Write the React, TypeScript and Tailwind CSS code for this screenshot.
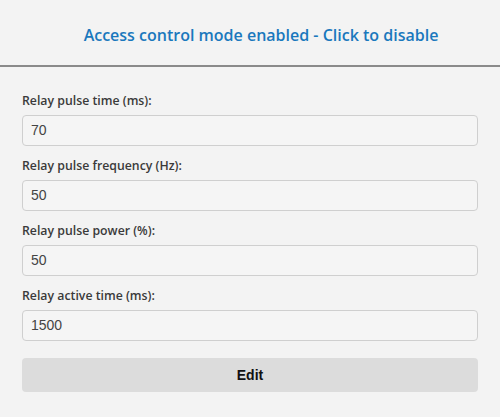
import React from "react";

const fields = [
  { label: "Relay pulse time (ms):", value: "70" },
  { label: "Relay pulse frequency (Hz):", value: "50" },
  { label: "Relay pulse power (%):", value: "50" },
  { label: "Relay active time (ms):", value: "1500" },
];

export default function App() {
  return (
    <div className="w-[500px] h-[417px] bg-[#f3f3f3] overflow-hidden">
      <div className="h-[65px] flex items-center justify-center pl-[22px] pt-[5px]">
        <span
          className="text-[#1a78bd] text-[16px] font-semibold"
          style={{ fontFamily: '"Open Sans", sans-serif' }}
        >
          Access control mode enabled - Click to disable
        </span>
      </div>
      <div className="h-[2px] bg-[#8a8a8a]" />
      <div className="px-[22px] pt-[24px]">
        {fields.map((f, i) => (
          <div key={i} className={i === 3 ? "mb-[17px]" : "mb-[10px]"}>
            <div
              className="h-[20px] leading-[20px] mb-[4px] text-[12.3px] font-semibold text-[#3a3a3a]"
              style={{ fontFamily: '"Open Sans", sans-serif' }}
            >
              {f.label}
            </div>
            <div
              className="h-[31px] border border-[#cfcfcf] rounded-[4px] bg-[#f5f5f5] flex items-center px-[8px] text-[14px] text-[#444]"
              style={{ fontFamily: '"Liberation Sans", Arial, sans-serif' }}
            >
              {f.value}
            </div>
          </div>
        ))}
        <button
          className="w-full h-[34px] rounded-[4px] bg-[#dcdcdc] text-[14px] font-bold text-[#111] flex items-center justify-center"
          style={{ fontFamily: '"Liberation Sans", Arial, sans-serif' }}
        >
          Edit
        </button>
      </div>
    </div>
  );
}
